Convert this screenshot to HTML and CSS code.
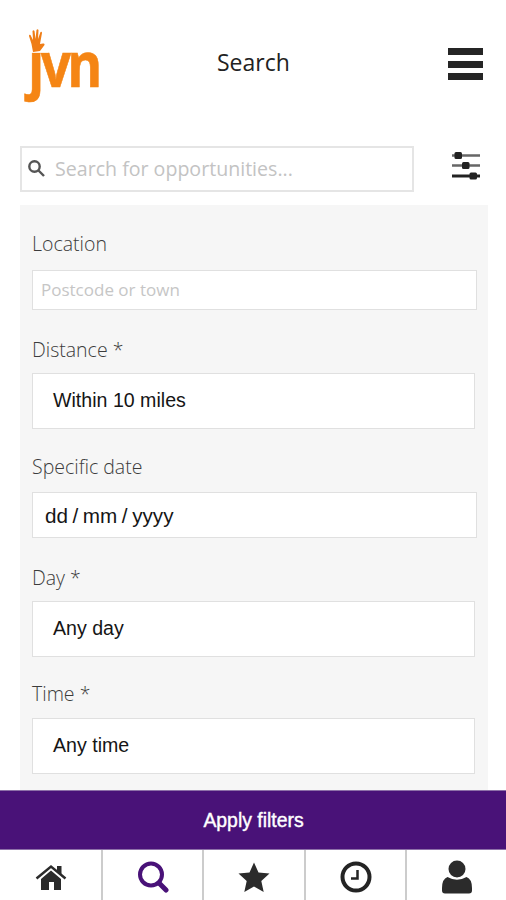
FILE: index.html
```html
<!DOCTYPE html>
<html lang="en">
<head>
<meta charset="utf-8">
<title>Search</title>
<link rel="stylesheet" href="styles.css">
</head>
<body>
<div class="app">
  <header class="header">
    <svg class="logo" viewBox="0 0 80 78" aria-label="jvn">
      <text class="logo-text" transform="translate(4 59) scale(.86 1)">j<tspan dx="-4">v</tspan><tspan dx="-4.500">n</tspan></text>
      <path class="mask" d="M0 0H24V24.500H0z"/>
      <path class="hand" d="M9 24 7.500 16 5 8Q5 6 6.500 7L9 12 8.500 3Q9.500 1.500 10.500 3L11.500 11 12.500 2Q13.500 .5 14.500 2L14 11 16.500 4Q18 3 18 5L16 16 19 15.500Q21 15 20.500 17L16 23Z"/>
    </svg>
    <h1 class="title">Search</h1>
    <div class="menu"><i></i><i></i><i></i></div>
  </header>
  <div class="search-row">
    <div class="search-box">
      <svg class="search-icon" viewBox="0 0 17 17"><circle cx="6.500" cy="6.500" r="5.200"/><path d="m10.500 10.500 5.500 5.500"/></svg>
      <span class="search-hint">Search for opportunities...</span>
    </div>
    <svg class="sliders" viewBox="0 0 30 29">
      <path class="rail" d="M1 4.500h28M1 14.500h28"/><path class="rail dark" d="M1 25h28"/>
      <rect x="3.500" y="1" width="7.500" height="7" rx="1.500"/><rect x="11" y="11" width="7.500" height="7" rx="1.500"/><rect x="18.500" y="21.500" width="7.500" height="7" rx="1.500"/>
    </svg>
  </div>
  <main class="panel">
    <div class="label location">Location</div>
    <div class="field postcode"><span>Postcode or town</span></div>
    <div class="label distance">Distance *</div>
    <div class="field select"><span>Within 10 miles</span></div>
    <div class="label specific">Specific date</div>
    <div class="field date"><span>dd / mm / yyyy</span></div>
    <div class="label day">Day *</div>
    <div class="field select"><span>Any day</span></div>
    <div class="label time">Time *</div>
    <div class="field select"><span>Any time</span></div>
  </main>
  <div class="apply"><span>Apply filters</span></div>
  <nav class="tabs">
    <div class="tab"><svg viewBox="0 0 32 32"><path class="fill" d="M6 18 16 9.500 26 18v11h-7v-8h-5v8H6z"/><path class="roof" d="M1.500 17.500 16 5.500l14.500 12"/><path class="fill" d="M22 5h4.500v9L22 10z"/></svg></div>
    <div class="tab"><svg class="active" viewBox="0 0 32 32"><circle cx="14" cy="13.500" r="11"/><path d="m22 22 7 7"/></svg></div>
    <div class="tab"><svg viewBox="0 0 32 32"><path class="fill" d="m16 1.500 4.500 9.900L31.500 12.600l-8.200 7.400 2.400 11L16 25.500 6.300 31 8.700 20 .5 12.600l11-1.200z"/></svg></div>
    <div class="tab"><svg class="clock" viewBox="0 0 32 32"><circle cx="16" cy="16" r="13.500"/><path d="M17.500 9v8.500H11"/></svg></div>
    <div class="tab"><svg class="person" viewBox="0 0 32 34"><circle class="fill" cx="16" cy="9" r="8.500"/><path class="fill" d="M6.500 17Q16 22.500 25.500 17 31 19 31 28v2.500q0 3-3 3H4q-3 0-3-3V28Q1 19 6.500 17z"/><path class="collar" d="M7 15.500Q16 21.500 25 15.500"/></svg></div>
  </nav>
</div>
</body>
</html>
```
FILE: styles.css
```css
* { box-sizing: border-box; }
body { margin: 0; background: #fff; font-family: "Open Sans", sans-serif; }
.app { width: 506px; height: 900px; display: flex; flex-direction: column; overflow: hidden; }
.header { height: 146px; flex: none; display: flex; align-items: flex-start; padding: 28px 23px 0 24px; }
.logo { width: 80px; height: 78px; flex: none; overflow: visible; }
.logo-text { font: 700 62px "Open Sans", sans-serif; fill: #f58514; stroke: #f58514; stroke-width: .6; }
.mask { fill: #fff; }
.hand { fill: #ef7d16; }
.title { margin: 18px 0 0 113px; font-size: 23px; line-height: 32px; font-weight: 400; color: #222; width: 90px; }
.menu { margin: 20px 0 0 auto; width: 35px; display: grid; gap: 5.500px; }
.menu i { height: 7px; background: #252525; }
.search-row { height: 59px; flex: none; display: flex; padding-left: 20px; }
.search-box { width: 394px; height: 46px; border: 2px solid #e5e5e5; display: flex; align-items: center; padding-left: 6px; }
.search-icon { width: 17px; height: 17px; fill: none; stroke: #555; stroke-width: 2.400; margin-bottom: 1px; }
.search-hint { margin-left: 10px; font-size: 19.600px; line-height: 28px; color: #c3c3c3; white-space: nowrap; }
.sliders { width: 30px; height: 29px; margin: 5px 0 0 37px; fill: #222; }
.rail { stroke: #666; stroke-width: 2.500; }
.dark { stroke: #222; stroke-width: 3; }
.panel { flex: 1; min-height: 0; width: 468px; margin-left: 20px; padding: 0 11px 0 12px; background: #f6f6f6; display: flex; flex-direction: column; }
.label { font-size: 19.500px; line-height: 26px; font-weight: 300; color: #3c3c3c; white-space: nowrap; flex: none; }
.location { margin: 26px 0 13px; }
.distance { margin: 27px 0 10px; }
.specific { margin: 25px 0 12px; }
.day { margin: 27px 0 10px; }
.time { margin: 24px 0 11px; }
.field { border: 1px solid #e0e0e0; background: #fff; display: flex; align-items: center; flex: none; white-space: nowrap; color: #151515; }
.postcode { height: 40px; padding: 0 0 1px 8px; font-size: 17px; color: #c6c6c6; }
.select { width: 443px; height: 56px; padding: 0 0 2px 20px; font-family: "Liberation Sans", sans-serif; font-size: 19.600px; }
.date { height: 46px; padding: 2px 0 0 12px; font-family: "Liberation Sans", sans-serif; font-size: 20.700px; word-spacing: -1.200px; }
.apply { height: 60px; flex: none; background: #491278; border-top: 1px solid #8d70a8; border-bottom: 1px solid #8d70a8; display: flex; align-items: center; justify-content: center; color: #fff; font: 19.400px "Liberation Sans", sans-serif; -webkit-text-stroke: .4px #fff; }
.apply span { margin-left: 1px; }
.tabs { height: 50px; flex: none; display: grid; grid-template-columns: 103px 101px 102px 101px 99px; }
.tab { display: flex; justify-content: center; padding-top: 11px; border-right: 2px solid #ccc; }
.tab:last-child { border-right: 0; }
.tab svg { width: 32px; height: 32px; }
.tab .person { height: 34px; margin-top: -1px; }
.fill { fill: #2b2b2b; }
.roof { fill: none; stroke: #2b2b2b; stroke-width: 2.500; }
.active { fill: none; stroke: #491278; stroke-width: 4; }
.active path { stroke-width: 5; stroke-linecap: round; }
.clock { fill: none; stroke: #242424; stroke-width: 4; }
.clock path { stroke-width: 2.500; }
.collar { fill: none; stroke: #fff; stroke-width: 1.200; }
```
